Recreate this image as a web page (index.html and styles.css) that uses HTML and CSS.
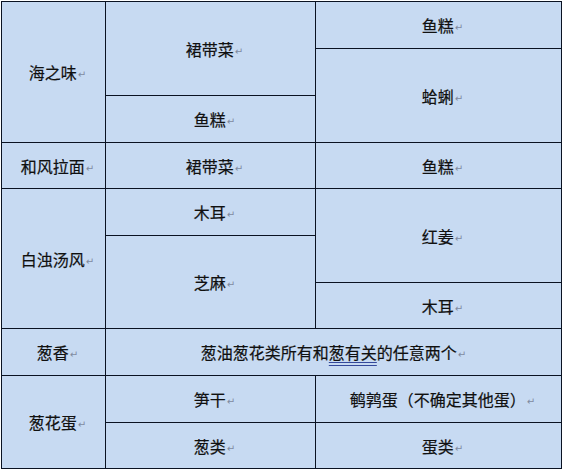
FILE: index.html
```html
<!DOCTYPE html>
<html lang="zh-CN">
<head>
<meta charset="utf-8">
<title>拉面配料表</title>
<link rel="stylesheet" href="styles.css">
</head>
<body>
<div class="sheet">
  <div class="cell c1 r1 s3">海之味<span class="pm">↵</span></div>
  <div class="cell c2 r1 s2">裙带菜<span class="pm">↵</span></div>
  <div class="cell c3 r1">鱼糕<span class="pm">↵</span></div>
  <div class="cell c3 r2 s2">蛤蜊<span class="pm">↵</span></div>
  <div class="cell c2 r3">鱼糕<span class="pm">↵</span></div>

  <div class="cell c1 r4">和风拉面<span class="pm">↵</span></div>
  <div class="cell c2 r4">裙带菜<span class="pm">↵</span></div>
  <div class="cell c3 r4">鱼糕<span class="pm">↵</span></div>

  <div class="cell c1 r5 s3">白浊汤风<span class="pm">↵</span></div>
  <div class="cell c2 r5">木耳<span class="pm">↵</span></div>
  <div class="cell c3 r5 s2">红姜<span class="pm">↵</span></div>
  <div class="cell c2 r6 s2">芝麻<span class="pm">↵</span></div>
  <div class="cell c3 r7">木耳<span class="pm">↵</span></div>

  <div class="cell c1 r8">葱香<span class="pm">↵</span></div>
  <div class="cell c23 r8 wide">葱油葱花类所有和<span class="dbl">葱有关</span>的任意两个<span class="pm">↵</span></div>

  <div class="cell c1 r9 s2">葱花蛋<span class="pm">↵</span></div>
  <div class="cell c2 r9">笋干<span class="pm">↵</span></div>
  <div class="cell c3 r9">鹌鹑蛋（不确定其他蛋）<span class="pm">↵</span></div>
  <div class="cell c2 r10">葱类<span class="pm">↵</span></div>
  <div class="cell c3 r10">蛋类<span class="pm">↵</span></div>
</div>
</body>
</html>
```

FILE: styles.css
```css
html, body {
  margin: 0;
  padding: 0;
  background: #ffffff;
}

body {
  font-family: "Noto Sans CJK SC", "Noto Sans", sans-serif;
  font-size: 16px;
  color: #101010;
  text-spacing-trim: space-all;
}

.sheet {
  display: grid;
  margin: 1px 0 0 1px;
  width: 561px;
  box-sizing: border-box;
  grid-template-columns: 104px 210px 246px;
  grid-template-rows: 47px 47px 47px 46px 47px 47px 46px 47px 47px 46px;
  border-top: 1px solid #0a1222;
  border-left: 1px solid #0a1222;
  background: #c7daf2;
}

.cell {
  display: flex;
  align-items: center;
  justify-content: center;
  box-sizing: border-box;
  border-right: 1px solid #0a1222;
  border-bottom: 1px solid #0a1222;
  background: #c7daf2;
  padding-left: 8px;
  line-height: 1;
  white-space: nowrap;
  -webkit-text-stroke: 0.2px #101010;
}

.wide {
  padding-left: 0;
}

.c1 { grid-column: 1; }
.c2 { grid-column: 2; }
.c3 { grid-column: 3; }
.c23 { grid-column: 2 / 4; }

.r1 { grid-row-start: 1; }
.r2 { grid-row-start: 2; }
.r3 { grid-row-start: 3; }
.r4 { grid-row-start: 4; }
.r5 { grid-row-start: 5; }
.r6 { grid-row-start: 6; }
.r7 { grid-row-start: 7; }
.r8 { grid-row-start: 8; }
.r9 { grid-row-start: 9; }
.r10 { grid-row-start: 10; }

.s2 { grid-row-end: span 2; }
.s3 { grid-row-end: span 3; }

.pm {
  font-family: "DejaVu Sans", sans-serif;
  font-size: 10px;
  color: #7f8aa0;
  margin-left: 1px;
  padding-top: 6px;
  -webkit-text-stroke: 0;
}

.dbl {
  text-decoration-line: underline;
  text-decoration-style: double;
  text-decoration-color: #34489a;
  text-underline-offset: 3px;
}
```
